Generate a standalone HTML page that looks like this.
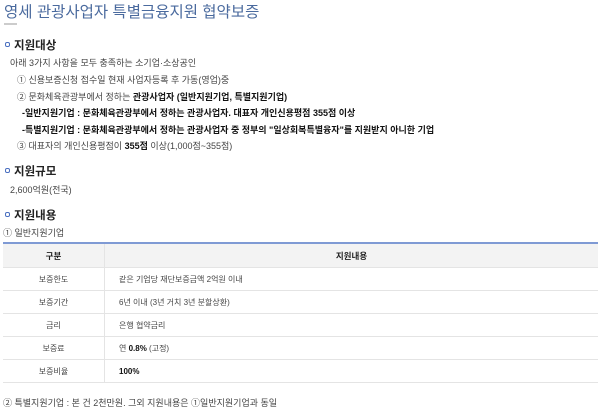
<!DOCTYPE html>
<html><head><meta charset="utf-8"><style>
body{margin:0;width:602px;height:413px;background:#fff;font-family:"Liberation Sans","Noto Sans CJK KR",sans-serif;color:#333;position:relative;overflow:hidden}
.a{position:absolute;white-space:nowrap;line-height:1}
.t{left:4px;top:5px;font-size:15.5px;color:#4a6a9e}
.bar{position:absolute;left:4px;top:23px;width:13px;height:2px;background:#ccc}
.h{font-size:11.5px;font-weight:bold;color:#222;left:5px}
.h:before{content:"";display:inline-block;width:3px;height:3px;border:1.5px solid #4a6fc0;border-radius:2px;margin-right:4px;vertical-align:2px}
.p{font-size:9px;color:#444}
b{color:#111}
table{position:absolute;left:3px;top:242px;width:595px;border-collapse:collapse;border-top:2px solid #7f9ad4;font-size:8px;color:#444}
td,th{border-bottom:1px solid #e4e4e4;height:22px;padding:0}
th{background:#f3f3f3;font-size:8.5px;color:#222;height:23px}
td:first-child,th:first-child{width:101px;text-align:center;border-right:1px solid #e4e4e4}
td+td{padding-left:14px}
</style></head><body>
<div class="a t">영세 관광사업자 특별금융지원 협약보증</div>
<div class="bar"></div>
<div class="a h" style="top:41px">지원대상</div>
<div class="a p" style="left:10px;top:59px">아래 3가지 사항을 모두 충족하는 소기업·소상공인</div>
<div class="a p" style="left:17px;top:76px">① 신용보증신청 접수일 현재 사업자등록 후 가동(영업)중</div>
<div class="a p" style="left:17px;top:93px">② 문화체육관광부에서 정하는 <b>관광사업자 (일반지원기업, 특별지원기업)</b></div>
<div class="a p" style="left:22px;top:109px"><b>-일반지원기업 : 문화체육관광부에서 정하는 관광사업자. 대표자 개인신용평점 355점 이상</b></div>
<div class="a p" style="left:22px;top:126px"><b>-특별지원기업 : 문화체육관광부에서 정하는 관광사업자 중 정부의 "일상회복특별융자"를 지원받지 아니한 기업</b></div>
<div class="a p" style="left:17px;top:142px">③ 대표자의 개인신용평점이 <b>355점</b> 이상(1,000점~355점)</div>
<div class="a h" style="top:167px">지원규모</div>
<div class="a p" style="left:10px;top:186px">2,600억원(전국)</div>
<div class="a h" style="top:211px">지원내용</div>
<div class="a p" style="left:3px;top:229px">① 일반지원기업</div>
<table>
<tr><th>구분</th><th>지원내용</th></tr>
<tr><td>보증한도</td><td>같은 기업당 재단보증금액 2억원 이내</td></tr>
<tr><td>보증기간</td><td>6년 이내 (3년 거치 3년 분할상환)</td></tr>
<tr><td>금리</td><td>은행 협약금리</td></tr>
<tr><td>보증료</td><td>연 <b>0.8%</b> (고정)</td></tr>
<tr><td>보증비율</td><td><b>100%</b></td></tr>
</table>
<div class="a p" style="left:3px;top:399px">② 특별지원기업 : 본 건 2천만원. 그외 지원내용은 ①일반지원기업과 동일</div>
</body></html>
